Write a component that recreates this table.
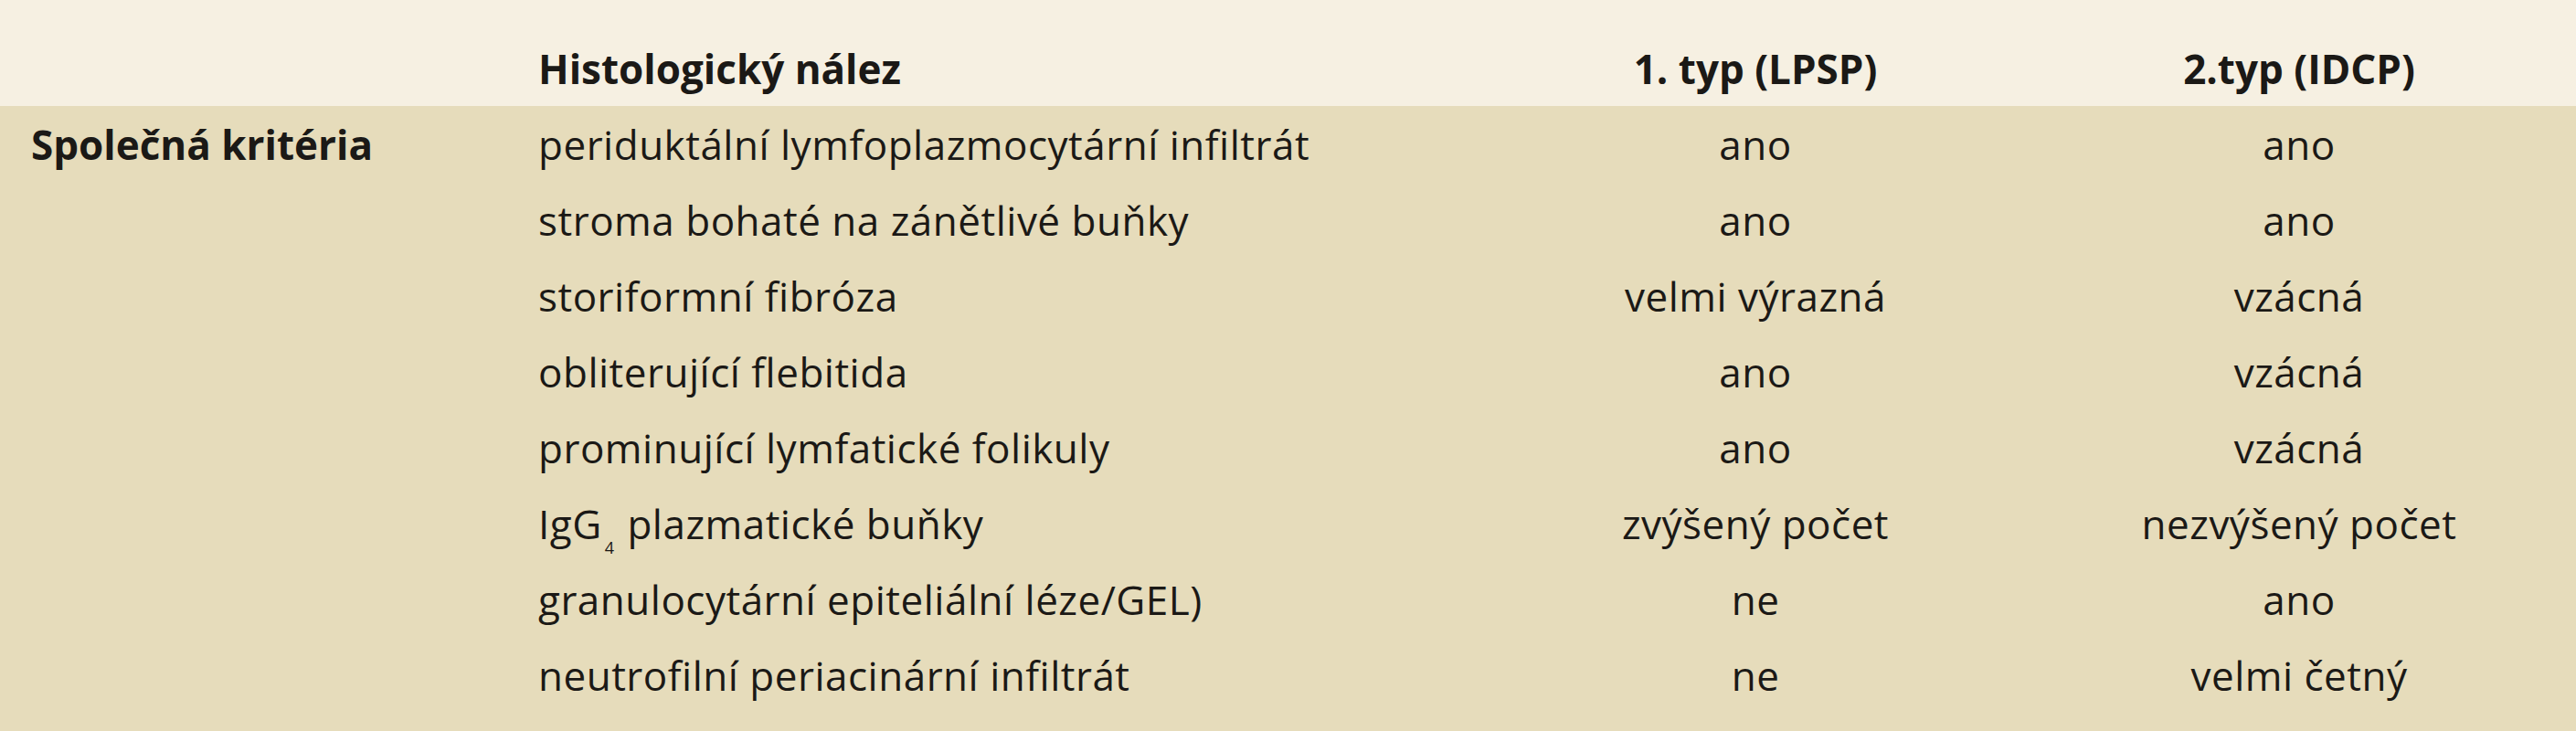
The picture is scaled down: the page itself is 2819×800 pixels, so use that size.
import React from "react";

const rows = [
  ["periduktální lymfoplazmocytární infiltrát", "ano", "ano"],
  ["stroma bohaté na zánětlivé buňky", "ano", "ano"],
  ["storiformní fibróza", "velmi výrazná", "vzácná"],
  ["obliterující flebitida", "ano", "vzácná"],
  ["prominující lymfatické folikuly", "ano", "vzácná"],
  [
    <>
      IgG<sub className="text-[18px] bottom-[-16px] ml-[3px] mr-[2px]">4</sub> plazmatické buňky
    </>,
    "zvýšený počet",
    "nezvýšený počet",
  ],
  ["granulocytární epiteliální léze/GEL)", "ne", "ano"],
  ["neutrofilní periacinární infiltrát", "ne", "velmi četný"],
];

const cols = "grid grid-cols-[555px_1037px_590px_600px]";

export default function App() {
  return (
    <div
      className="min-h-[800px] w-[2819px] bg-[#e6dcbb] text-[44px] leading-[83px] text-[#1b1916]"
      style={{ fontFamily: "'Open Sans', 'Noto Sans', sans-serif" }}
    >
      <div className={`${cols} h-[116px] bg-[#f6f0e2] pl-[34px] pt-[34px] font-bold`}>
        <div></div>
        <div>Histologický nález</div>
        <div className="text-center">1. typ (LPSP)</div>
        <div className="text-center">2.typ (IDCP)</div>
      </div>
      <div className="pl-[34px] pt-[1px]">
        {rows.map(([finding, first, second], i) => (
          <div key={i} className={`${cols} h-[83px] tracking-[0.5px]`}>
            <div className="font-bold tracking-normal">{i === 0 ? "Společná kritéria" : ""}</div>
            <div className="whitespace-nowrap">{finding}</div>
            <div className="text-center">{first}</div>
            <div className="text-center">{second}</div>
          </div>
        ))}
      </div>
    </div>
  );
}
